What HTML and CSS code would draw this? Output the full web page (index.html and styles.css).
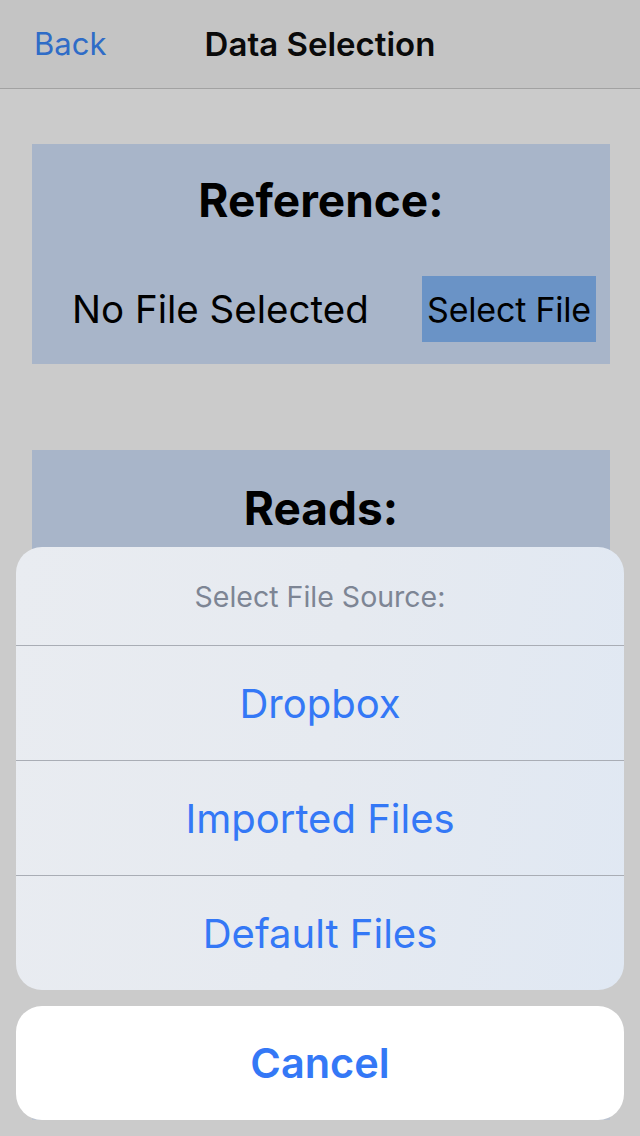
FILE: index.html
```html
<!DOCTYPE html>
<html>
<head>
<meta charset="utf-8">
<link rel="stylesheet" href="styles.css">
</head>
<body>
<div class="page">
  <header class="nav">
    <span class="nav-back">Back</span>
    <span class="nav-title">Data Selection</span>
  </header>
  <main class="content">
    <section class="panel">
      <h2 class="panel-title">Reference:</h2>
      <div class="panel-row">
        <span class="file-name">No File Selected</span>
        <span class="select-btn">Select File</span>
      </div>
    </section>
    <section class="panel panel-reads">
      <h2 class="panel-title">Reads:</h2>
    </section>
    <div class="bottom-buttons">
      <span class="bottom-btn"></span>
      <span class="bottom-btn"></span>
    </div>
  </main>
</div>
<div class="overlay">
  <div class="sheet">
    <div class="sheet-title">Select File Source:</div>
    <div class="sheet-item">Dropbox</div>
    <div class="sheet-item">Imported Files</div>
    <div class="sheet-item">Default Files</div>
  </div>
  <div class="cancel">Cancel</div>
</div>
</body>
</html>
```
FILE: styles.css
```css
html, body {
  margin: 0;
  padding: 0;
}
body {
  width: 640px;
  height: 1136px;
  overflow: hidden;
  background: #cbcbcb;
  font-family: Inter, Roboto, "Liberation Sans", sans-serif;
  position: relative;
}
.page {
  height: 1136px;
}
.nav {
  height: 88px;
  background: #c4c4c4;
  border-bottom: 1px solid #a2a2a2;
  position: relative;
  display: flex;
  align-items: center;
  justify-content: center;
}
.nav-back {
  position: absolute;
  left: 34px;
  top: 24px;
  font-size: 31px;
  line-height: 40px;
  color: #2f6cc7;
}
.nav-title {
  font-size: 33px;
  font-weight: 600;
  color: #0a0a0a;
  line-height: 40px;
}
.content {
  padding: 55px 30px 0 32px;
  display: flex;
  flex-direction: column;
}
.panel {
  background: #a8b5c9;
  height: 220px;
  box-sizing: border-box;
  padding-top: 30px;
  display: flex;
  flex-direction: column;
}
.panel-reads {
  margin-top: 86px;
  padding-top: 32px;
  height: 300px;
}
.panel-title {
  margin: 0;
  text-align: center;
  font-size: 46px;
  line-height: 52px;
  font-weight: 700;
  color: #000;
}
.panel-row {
  margin-top: 50px;
  height: 66px;
  display: flex;
  align-items: center;
  justify-content: space-between;
  padding: 0 14px 0 40px;
}
.file-name {
  font-size: 38.5px;
  color: #000;
}
.select-btn {
  background: #6a93c6;
  height: 66px;
  width: 174px;
  display: flex;
  align-items: center;
  justify-content: center;
  font-size: 34px;
  color: #000;
  letter-spacing: -0.2px;
}
.bottom-buttons {
  margin-top: 304px;
  display: flex;
  gap: 22px;
}
.bottom-btn {
  flex: 1;
  height: 66px;
  background: #bcc3cf;
}
.overlay {
  position: absolute;
  left: 0;
  top: 0;
  width: 640px;
  height: 1136px;
  box-sizing: border-box;
  padding: 0 16px 16px;
  display: flex;
  flex-direction: column;
  justify-content: flex-end;
  gap: 16px;
}
.sheet {
  border-radius: 26px;
  overflow: hidden;
  background: linear-gradient(100deg, #e9ecf1 0%, #e6eaf0 50%, #e0e8f3 100%);
}
.sheet-title {
  height: 98px;
  display: flex;
  align-items: center;
  justify-content: center;
  font-size: 28.5px;
  color: #7d8594;
}
.sheet-item {
  height: 114px;
  border-top: 1px solid #a9adb5;
  display: flex;
  align-items: center;
  justify-content: center;
  font-size: 40px;
  color: #3478f6;
}
.cancel {
  height: 114px;
  border-radius: 26px;
  background: #fff;
  display: flex;
  align-items: center;
  justify-content: center;
  font-size: 41.5px;
  font-weight: 600;
  color: #3478f6;
}
```
